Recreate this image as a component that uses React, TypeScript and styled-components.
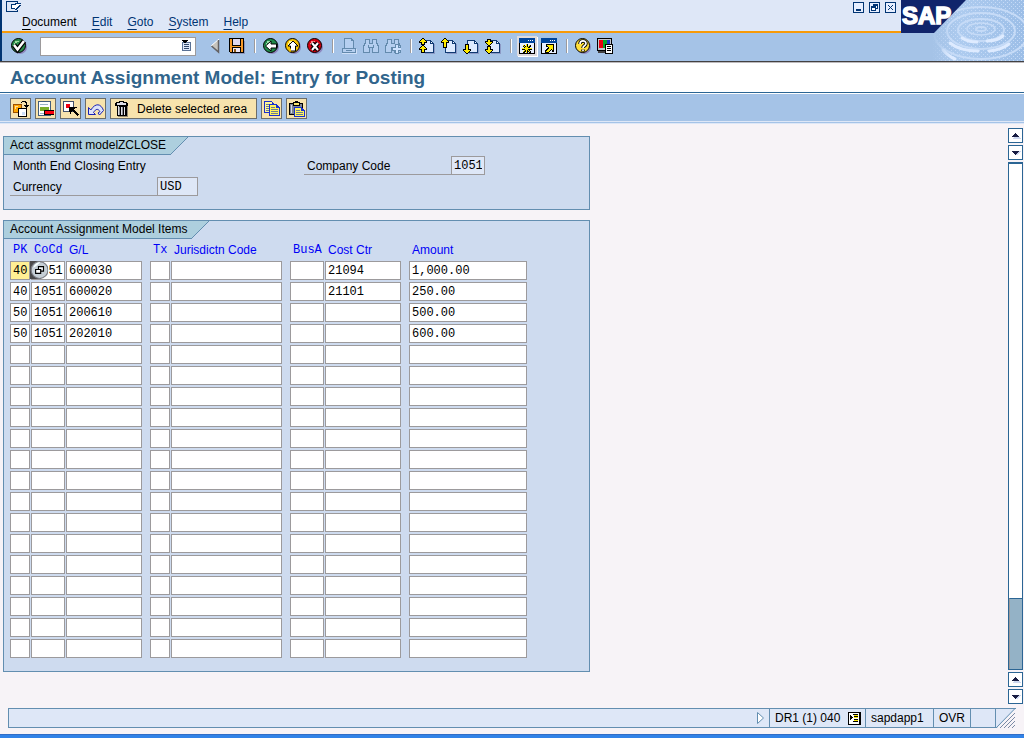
import React from 'react';
import styled, { createGlobalStyle, css } from 'styled-components';

const sans = '"Liberation Sans", Arial, sans-serif';
const mono = '"Liberation Mono", "Courier New", monospace';

const c = {
  page: '#f7f3f7',
  menu: '#dee7f7',
  bar: '#a5c3e7',
  panel: '#cedbef',
  line: '#638eb0',
  tab: '#adcfde',
  navy: '#003473',
  steel: '#2b6594',
  field: '#9c9a9c',
  cream: '#f7e3ad',
};

const GlobalStyle = createGlobalStyle`
  * { box-sizing: border-box; }
  body { margin: 0; background: ${c.page}; font: 12px/16px ${sans}; color: #000; }
  button, input { font: inherit; color: inherit; }
  button { padding: 0; border: 0; background: none; cursor: pointer; }
  svg { display: block; }
`;

const Page = styled.div`
  display: flex;
  flex-direction: column;
  min-height: 100vh;
`;

/* ---- header ---- */
const Header = styled.header`
  display: flex;
  height: 61px;
  background: ${c.bar};
  border-left: 2px solid ${c.navy};
`;
const HeaderMain = styled.div`
  flex: 1;
  min-width: 0;
  display: flex;
  flex-direction: column;
`;
const MenuArea = styled.div`
  display: flex;
  justify-content: space-between;
  height: 33px;
  background: ${c.menu};
  border-bottom: 2px solid #f79a08;
`;
const MenuLeft = styled.div`
  display: flex;
  flex-direction: column;
  gap: 1px;
  padding: 1px 0 0 4px;
  align-items: flex-start;
`;
const MenuNav = styled.nav`
  display: flex;
  gap: 15px;
  padding-left: 16px;
`;
const MenuLink = styled.a<{ $active?: boolean }>`
  display: block;
  color: ${(p) => (p.$active ? '#000' : c.navy)};
  text-decoration: none;
  &::first-letter {
    text-decoration: underline;
    text-underline-offset: 3px;
  }
`;
const WindowControls = styled.div`
  display: flex;
  align-items: flex-start;
  gap: 5px;
  padding: 2px 5px 0 0;
`;
const ToolRow = styled.div`
  flex: 1;
  display: flex;
  align-items: center;
  gap: 6px;
  padding: 0 0 2px 9px;
`;
const CommandBox = styled.div`
  position: relative;
  margin: 0 5px 0 7px;
`;
const CommandInput = styled.input`
  display: block;
  width: 156px;
  height: 19px;
  padding: 0 18px 0 3px;
  border: 1px solid ${c.field};
  background: #fff;
  outline: 0;
`;
const CommandDrop = styled.button`
  position: absolute;
  right: 2px;
  top: 1px;
`;
const IconButton = styled.button<{ $pressed?: boolean }>`
  flex: none;
  ${(p) =>
    p.$pressed &&
    css`
      background: #dedbde;
      box-shadow: 0 0 0 2px #dedbde, 1px 1px 0 2px #fff;
    `}
`;
const Separator = styled.span`
  width: 2px;
  height: 14px;
  margin: 0 1px 0 3px;
  border-left: 1px solid #9c9a9c;
  border-right: 1px solid #fff;
`;

/* ---- title and application toolbar ---- */
const TitleBar = styled.div`
  border-top: 1px solid #424142;
  background: #fff;
  box-shadow: inset 0 1px 0 #bdbabd;
  border-bottom: 1px solid ${c.steel};
  padding: 4px 10px 2px;
  h1 {
    margin: 0;
    font: bold 19px/24px ${sans};
    color: #31658c;
  }
`;
const AppToolbar = styled.div`
  display: flex;
  gap: 4px;
  height: 31px;
  padding: 4px 10px;
  border-top: 1px solid #fff;
  border-bottom: 3px double ${c.menu};
  background: ${c.bar};
`;
const AppButton = styled.button<{ $wide?: boolean }>`
  display: flex;
  align-items: center;
  gap: 7px;
  height: 21px;
  padding: ${(p) => (p.$wide ? '0 9px 0 3px' : '0 1px 0 2px')};
  border: 1px solid #6b6d6b;
  background: ${c.cream};
`;

/* ---- body ---- */
const Body = styled.div`
  flex: 1;
  display: flex;
  justify-content: space-between;
`;
const Content = styled.main`
  flex: 0 1 587px;
  margin: 12px 0 36px 3px;
  display: flex;
  flex-direction: column;
  gap: 10px;
`;
const Panel = styled.section`
  border: 1px solid ${c.line};
  background: ${c.panel};
`;
const PanelTab = styled.div`
  display: flex;
  height: 18px;
  h2 {
    margin: 0;
    padding: 0 4px 0 6px;
    background: ${c.tab};
    border-bottom: 1px solid ${c.line};
    font: 12px/17px ${sans};
  }
  &::after {
    content: '';
    width: 18px;
    background: linear-gradient(to bottom right, ${c.tab} 48%, ${c.line} 49%, ${c.line} 51%, transparent 52%);
  }
`;
const Summary = styled.div`
  display: grid;
  grid-template-columns: 188px 181px;
  column-gap: 106px;
  padding: 1px 6px 13px;
`;
const SummaryText = styled.p`
  margin: 0;
  padding-left: 3px;
  line-height: 21px;
`;
const LabeledField = styled.div`
  display: flex;
  height: 19px;
`;
const FieldLabel = styled.label`
  flex: 0 0 147px;
  padding-left: 3px;
  border-bottom: 1px solid ${c.field};
  line-height: 21px;
`;
const ReadonlyInput = styled.input<{ $width: number }>`
  width: ${(p) => p.$width}px;
  padding: 0 2px;
  border: 1px solid ${c.field};
  background: ${c.menu};
  font: 12px/16px ${mono};
  outline: 0;
`;

const ItemsTable = styled.table`
  table-layout: fixed;
  width: 517px;
  margin: 2px 6px 11px;
  border-collapse: collapse;
`;
const HeadCell = styled.th<{ $mono?: boolean }>`
  height: 20px;
  padding: 0 0 0 3px;
  text-align: left;
  vertical-align: top;
  white-space: nowrap;
  font: 12px/18px ${(p) => (p.$mono ? mono : sans)};
  color: #0000f7;
`;
const Cell = styled.td<{ $gap: number }>`
  position: relative;
  padding: 0 ${(p) => p.$gap}px 2px 0;
`;
const CellInput = styled.input<{ $focused?: boolean }>`
  display: block;
  width: 100%;
  height: 19px;
  padding: 0 0 0 2px;
  border: 1px solid ${c.field};
  border-radius: 0;
  background: ${(p) => (p.$focused ? '#ffef94' : '#fff')};
  font: 12px/16px ${mono};
  outline: 0;
`;
const MatchButton = styled.button`
  position: absolute;
  left: -1px;
  top: 0;
`;

/* ---- scroll bar ---- */
const ScrollRail = styled.div`
  display: flex;
  flex-direction: column;
  gap: 2px;
  width: 15px;
  margin: 4px 1px 4px 0;
`;
const ScrollButton = styled.button`
  display: flex;
  align-items: center;
  justify-content: center;
  height: 15px;
  flex: none;
  border: 1px solid ${c.steel};
  background: #fff;
`;
const ScrollTrack = styled.div`
  flex: 1;
  display: flex;
  align-items: flex-end;
  border: 1px solid ${c.steel};
  border-top-width: 2px;
  background: #fff;
`;
const ScrollThumb = styled.div`
  flex: 1;
  height: 71px;
  border-top: 1px solid ${c.steel};
  border-left: 1px solid #9c9a9c;
  background: #94b2c6;
`;

/* ---- status bar ---- */
const StatusBar = styled.footer`
  display: flex;
  height: 20px;
  margin: 0 8px 6px;
  border: 1px solid ${c.line};
  border-right: 0;
  background: ${c.menu};
`;
const StatusMessage = styled.div`
  flex: 1;
  display: flex;
  align-items: center;
  justify-content: flex-end;
  padding-right: 4px;
`;
const StatusCell = styled.div<{ $width: number }>`
  display: flex;
  align-items: center;
  gap: 8px;
  width: ${(p) => p.$width}px;
  padding-left: 5px;
  border-left: 1px solid ${c.line};
  white-space: nowrap;
`;
const BottomEdge = styled.div`
  height: 4px;
  background: #3182e7;
  border-top: 1px solid #316dc6;
`;

/* ---- icons ---- */
type IconName =
  | 'check' | 'list' | 'prev' | 'save' | 'back' | 'exit' | 'cancel' | 'print' | 'find' | 'findNext'
  | 'first' | 'pageUp' | 'pageDown' | 'last' | 'session' | 'shortcut' | 'help' | 'layout'
  | 'detail' | 'removeRow' | 'choose' | 'undo' | 'trash' | 'copy' | 'paste' | 'match';

const ball = (fill: string, hi: string) => (
  <>
    <circle cx="9" cy="9" r="7" fill="#8c86bd" />
    <circle cx="7.5" cy="7.5" r="7" fill={fill} stroke="#000" />
    <path d="M4 3h4v1H6v1H4v2H3V5h1z" fill={hi} />
  </>
);
const sheet = (
  <>
    <path d="M6 15h9V6h1v10H6z" fill="#8c9ac6" />
    <path d="M4 2h8v1h1v1h1v1h1v10H4z" fill="#103a73" />
    <path d="M5 3h6v3h3v8H5z" fill="#deebff" />
    <path d="M12 4h1v1h-1z" fill="#fff" />
  </>
);
const up = (y: number, stem: number) => (
  <>
    <path d={`M3 ${y}h2v1h1v1h1v1h1v2H6v${stem}H2v-${stem}H0v-2h1v-1h1v-1h1z`} fill="#000" />
    <path d={`M3 ${y + 1}h2v1h1v1h1v1H5v${stem}H3v-${stem}H1v-1h1v-1h1z`} fill="#ffeb00" />
  </>
);
const down = (y: number, stem: number) => (
  <g transform={`matrix(1 0 0 -1 0 ${y})`}>{up(0, stem)}</g>
);
const frame = (
  <>
    <path d="M0 0h16v16H0z" fill="#000" />
    <path d="M1 5h14v10H1z" fill="#e7efff" />
    <path d="M0 0h16v5H0z" fill="#00459c" />
    <path d="M9 2h1v1H9zM11 2h1v1h-1zM13 2h1v1h-1z" fill="#fff" />
  </>
);

const art: Record<IconName, React.ReactNode> = {
  check: (
    <>
      {ball('#298a4a', '#9cdb9c')}
      <path d="M3 7l3.500 4.500L13 3" fill="none" stroke="#000" strokeWidth="5" />
      <path d="M3 7l3.500 4.500L13 3" fill="none" stroke="#fff" strokeWidth="2.500" />
    </>
  ),
  list: (
    <>
      <path d="M4 4h9v9H4z" fill="#5a7194" />
      <path d="M5 5h7v7H5z" fill="#dee7f7" />
      <path d="M6 6h5v1H6zM6 8h5v1H6zM6 10h5v1H6z" fill="#31496b" />
      <path d="M4 2h6v1H9v1H8v1H6V4H5V3H4z" fill="#000" />
    </>
  ),
  prev: (
    <>
      <path d="M4 8l8-7v13z" fill="#c6c3bd" />
      <path d="M4 8l8-7" fill="none" stroke="#fff" />
      <path d="M11.500 2v12L4.500 8" fill="none" stroke="#636163" strokeWidth="1.500" />
    </>
  ),
  save: (
    <>
      <path d="M2 15h13V3h1v13H2z" fill="#8c96bd" />
      <path d="M0 0h15v15H1v-1H0z" fill="#000" />
      <path d="M1 1h13v13H1z" fill="#f79a29" />
      <path d="M3 0h9v8H3zM3 9h9v6H3z" fill="#000" />
      <path d="M4 1h7v6H4z" fill="#ded7ef" />
      <path d="M4 10h7v4H4z" fill="#efe7f7" />
      <path d="M5 11h2v3H5z" fill="#8c5a18" />
    </>
  ),
  back: (
    <>
      {ball('#218a4a', '#9ce3ad')}
      <path d="M2.500 8L8 3v3h5.500v4H8v3z" fill="#fff" stroke="#000" />
    </>
  ),
  exit: (
    <>
      {ball('#f7c300', '#fff79c')}
      <path d="M8 3l5 5h-2.500v5h-5V8H3z" fill="#fff" stroke="#000" />
      <path d="M4 10.500h2v3H4z" fill="#f7c300" />
    </>
  ),
  cancel: (
    <>
      {ball('#d60010', '#ff8c8c')}
      <path d="M5 5l6 7M11 5l-6 7" fill="none" stroke="#000" strokeWidth="4.500" />
      <path d="M5 5l6 7M11 5l-6 7" fill="none" stroke="#fff" strokeWidth="2" />
    </>
  ),
  print: (
    <>
      <path d="M1 15h14v-4h1v5H1z" fill="#cedff7" />
      <path d="M3 0h8v1h1v1h1v8h2v5H1v-5h2z" fill="#638aad" />
      <path d="M4 1h6v2h2v7H4zM2 11h12v3H2z" fill="#b5cff0" />
      <path d="M5 12h6v1H5z" fill="#638aad" />
    </>
  ),
  find: (
    <>
      <path d="M2 1h5v4h2V1h5v4h1v2h1v8H9v-5H7v5H0V7h1V5h1z" fill="#638aad" />
      <path d="M3 2h3v4h4V2h3v4h1v2h1v6h-5V9H6v5H1V8h1V6h1z" fill="#b5cff0" />
      <path d="M5 7h1v3H5zM10 7h1v3h-1z" fill="#638aad" />
    </>
  ),
  findNext: (
    <>
      <path d="M2 1h5v4h2V1h5v4h1v2h1v8H9v-5H7v5H0V7h1V5h1z" fill="#638aad" />
      <path d="M3 2h3v4h4V2h3v4h1v2h1v6h-5V9H6v5H1V8h1V6h1z" fill="#b5cff0" />
      <path d="M10 6h4v3h2v4h-2v3h-4v-3H7V9h3z" fill="#638aad" />
      <path d="M11 7h2v3h3v2h-3v3h-2v-3H8v-2h3z" fill="#cee3ff" />
    </>
  ),
  first: <>{sheet}{up(0, 2)}{up(7, 3)}</>,
  pageUp: <>{sheet}{up(0, 5)}</>,
  pageDown: <>{sheet}{down(16, 5)}</>,
  last: <>{sheet}{down(8, 2)}{down(16, 3)}</>,
  session: (
    <>
      {frame}
      <path d="M7 6h2v2h1V7h2v2h-1v1h2v2h-2v1h1v2h-2v-1H9v1H7v-1H6v1H4v-2h1v-1H3v-2h2V9H4V7h2v1h1z" fill="#000" />
      <path d="M7 6h1v9H7zM3 10h10v1H3zM4 7h1v1H4zM5 8h1v1H5zM6 9h3v3H6zM9 8h1v1H9zM10 7h1v1h-1zM5 12h1v1H5zM4 13h1v1H4zM9 12h1v1H9zM10 13h1v1h-1z" fill="#ffeb00" />
    </>
  ),
  shortcut: (
    <>
      {frame}
      <path d="M5 6h8v8h-2v-2h-1v1H9v1H8v1H4v-3h1v-1h1v-1h1V9H5z" fill="#000" />
      <path d="M6 7h6v5h-1v-1h-1v1H9v1H8v1H5v-1h1v-1h1v-1h1V9H7V8H6z" fill="#ffeb00" />
    </>
  ),
  help: (
    <>
      <circle cx="9" cy="9" r="7" fill="#8c86bd" />
      <circle cx="7.500" cy="7.500" r="7" fill="#ffdf39" stroke="#000" />
      <path d="M5 6c0-4 6-4 6-.5C11 8 8 7.500 8 10M8 11.500v2" fill="none" stroke="#000" strokeWidth="3.500" />
      <path d="M5 6c0-4 6-4 6-.5C11 8 8 7.500 8 10M8 11.500v1.500" fill="none" stroke="#fff" strokeWidth="1.700" />
    </>
  ),
  layout: (
    <>
      <path d="M0 0h15v13H0z" fill="#000" />
      <path d="M1 1h13v11H1z" fill="#c6c7ce" />
      <path d="M2 2h4v8H2z" fill="#e70010" />
      <path d="M6 2h4v8H6z" fill="#00a629" />
      <path d="M10 2h3v8h-3z" fill="#1834c6" />
      <path d="M1 13h8v2H1z" fill="#424142" />
      <path d="M8 6h8v10H8z" fill="#000" />
      <path d="M9 7h6v8H9z" fill="#fff" />
      <path d="M10 8h4v1h-4zM10 10h4v1h-4zM10 12h4v1h-4z" fill="#000" />
    </>
  ),
  detail: (
    <>
      <path d="M0 3h9v9H0z" fill="#9c5100" />
      <path d="M1 4h7v7H1z" fill="#ffa600" />
      <path d="M2 5h3v1H3v2H2z" fill="#ffdf9c" />
      <path d="M8 1h1V0h4v1h1v3h2v1h-1v1h-1v1h-1V6h-1V5h-1V4h2V2h-1V1H9v1H8z" fill="#000" />
      <path d="M5 7h9v9H5z" fill="#000" />
      <path d="M6 8h7v7H6z" fill="#fff" />
      <path d="M9 11h3v3H9z" fill="#cedff7" />
    </>
  ),
  removeRow: (
    <>
      <path d="M0 0h13v15H0z" fill="#425d7b" />
      <path d="M1 1h11v13H1z" fill="#fff" />
      <path d="M2 3h8v1H2zM2 12h4v1H2z" fill="#9cb2c6" />
      <path d="M2 6h9v4H2z" fill="#7bae29" />
      <path d="M6 9h10v5H6z" fill="#000" />
      <path d="M7 10h9v3H7z" fill="#f70010" />
    </>
  ),
  choose: (
    <>
      <path d="M0 0h11v11H0z" fill="#42516b" />
      <path d="M1 1h9v9H1z" fill="#fff" />
      <path d="M3 3h4v4H3z" fill="#ef0010" />
      <path d="M6 6h8v1h-2v1h-1v1h1v1h1v1h1v1h1v1h1v1h-1v1h-1v-1h-1v-1h-1v-1h-1v-1h-1v-1H9v1H8v2H7v-2H6z" fill="#000" />
    </>
  ),
  undo: (
    <path
      d="M.5 6.500V13.500H7.500L5.500 11.500C8 7.500 10 7.500 12 10.500L10 12l1.500 2 4-4.500C13 2.500 7.500 1.500 2.800 9z"
      fill="#dee3f7"
      stroke="#1820b5"
    />
  ),
  trash: (
    <>
      <path d="M4 15h9V5h1v11H4z" fill="#948a73" />
      <path d="M5 0h5v1h3v1h1v3h-1v10H3V5H1V2h1V1h3z" fill="#000" />
      <path d="M6 1h3v1H6zM3 2h9v2H3z" fill="#dedfe7" />
      <path d="M4 5h1v9H4zM7 6h1v8H7zM10 6h1v8h-1z" fill="#dedfe7" />
      <path d="M5 6h1v8H5zM8 6h1v8H8z" fill="#8c8e94" />
    </>
  ),
  copy: (
    <>
      <path d="M0 0h8v1h1v1h1v10H0z" fill="#1830ce" />
      <path d="M1 1h7v10H1z" fill="#fff794" />
      <path d="M2 3h5v1H2zM2 5h5v1H2zM2 7h5v1H2zM2 9h5v1H2z" fill="#6b7d94" />
      <path d="M5 3h8v1h1v1h1v1h1v9H5z" fill="#1830ce" />
      <path d="M6 4h6v3h3v7H6z" fill="#fff35a" />
      <path d="M7 6h4v1H7zM7 8h7v1H7zM7 10h7v1H7zM7 12h7v1H7z" fill="#6b7d94" />
    </>
  ),
  paste: (
    <>
      <path d="M0 2h14v12H0z" fill="#000" />
      <path d="M1 3h12v10H1z" fill="#7b8494" />
      <path d="M2 4h1v8H2z" fill="#d6dbe7" />
      <path d="M4 1h2V0h3v1h2v4H4z" fill="#000" />
      <path d="M5 2h5v2H5z" fill="#f7e36b" />
      <path d="M5 6h8v1h1v1h1v1h1v7H5z" fill="#1830ce" />
      <path d="M6 7h6v3h3v5H6z" fill="#fff35a" />
      <path d="M7 9h4v1H7zM7 11h7v1H7zM7 13h7v1H7z" fill="#6b7d94" />
    </>
  ),
  match: (
    <>
      <path d="M0 0h10v16H0z" fill="#4a494a" />
      <circle cx="8.500" cy="8" r="7.500" fill="#c6cfd6" stroke="#7b7d84" />
      <path d="M3 6a6 6 0 0 1 6-5c-2 2-4 4-6 5z" fill="#f7ffff" />
      <path d="M7.500 5h4.500v4H7.500z" fill="#eff3f7" stroke="#000" />
      <path d="M5 7.500h4.500v3.500H5z" fill="#fff" stroke="#000" />
    </>
  ),
};

const smooth: IconName[] = ['check', 'cancel', 'help', 'back', 'exit', 'undo', 'prev', 'match'];

const Icon = ({ name }: { name: IconName }) => (
  <svg
    width="16"
    height="16"
    viewBox="0 0 16 16"
    aria-hidden="true"
    shapeRendering={smooth.includes(name) ? 'auto' : 'crispEdges'}
  >
    {art[name]}
  </svg>
);

const Arrow = ({ dir }: { dir: 'up' | 'down' }) => (
  <svg width="11" height="9" viewBox="0 0 11 9" shapeRendering="crispEdges" aria-hidden="true">
    <path d={dir === 'up' ? 'M6 3l5 5H3z' : 'M2 3h9L7 8z'} fill="#ced7ef" />
    <path d={dir === 'up' ? 'M5 2h1v1h1v1h1v1h1v1H2V5h1V4h1V3h1z' : 'M2 3h7v1H8v1H7v1H6v1H5V6H4V5H3V4H2z'} fill="#181c42" />
  </svg>
);

const WindowIcon = ({ kind }: { kind: 'min' | 'restore' | 'close' }) => (
  <svg width="11" height="11" viewBox="0 0 11 11" shapeRendering="crispEdges" aria-hidden="true">
    <path d="M0 0h11v11H0z" fill={c.navy} />
    <path d="M1 1h9v9H1z" fill="#e7efff" />
    {kind === 'min' && <path d="M3 7h5v2H3z" fill={c.navy} />}
    {kind === 'restore' && (
      <>
        <path d="M4 2h5v5H4z" fill={c.navy} />
        <path d="M5 4h3v2H5z" fill="#fff" />
        <path d="M2 4h5v5H2z" fill={c.navy} />
        <path d="M3 6h3v2H3z" fill="#fff" />
      </>
    )}
    {kind === 'close' && (
      <path
        d="M3 3h1v1H3zM7 3h1v1H7zM4 4h1v1H4zM6 4h1v1H6zM5 5h1v1H5zM4 6h1v1H4zM6 6h1v1H6zM3 7h1v1H3zM7 7h1v1H7z"
        fill={c.navy}
      />
    )}
  </svg>
);

const Brand = () => (
  <svg width="123" height="61" viewBox="0 0 123 61" role="img" aria-label="SAP">
    <defs>
      <linearGradient id="water" x1="0" x2="1">
        <stop offset="0.25" stopColor="#a5c3e7" />
        <stop offset="0.5" stopColor="#adcbef" />
        <stop offset="1" stopColor="#9cbee7" />
      </linearGradient>
      <pattern id="grain" width="4" height="4" patternUnits="userSpaceOnUse">
        <path d="M0 0h1v1H0zM2 2h1v1H2z" fill="#c6dbf7" />
      </pattern>
      <linearGradient id="fade" x1="0" x2="1">
        <stop offset="0.25" stopColor="#000" />
        <stop offset="0.4" stopColor="#fff" />
      </linearGradient>
      <mask id="edge">
        <path d="M0 0h123v61H0z" fill="url(#fade)" />
      </mask>
    </defs>
    <path d="M0 0h123v61H0z" fill="url(#water)" />
    <g mask="url(#edge)">
      <path d="M0 0h123v61H0z" fill="url(#grain)" />
      <g fill="none" stroke="#c6dbf7">
        <ellipse cx="80" cy="29" rx="5" ry="2" strokeWidth="2" />
        <ellipse cx="80" cy="29" rx="14" ry="6" strokeWidth="1.500" />
        <ellipse cx="80" cy="30" rx="23" ry="11" strokeWidth="2" />
        <ellipse cx="80" cy="31" rx="34" ry="18" strokeWidth="2" />
        <ellipse cx="80" cy="33" rx="47" ry="26" strokeWidth="2" />
      </g>
      <g fill="none" stroke="#deebff" strokeWidth="3" strokeLinecap="round">
        <path d="M49 43q10 8 28 8M86 41q10 0 16-5M61 38q6 4 15 4M42 50q5 6 12 9M88 51q12-1 20-7" />
      </g>
    </g>
    <path d="M0 0h65L33 33H0z" fill="#10246b" />
    <text
      x="1"
      y="24"
      fill="#fff"
      stroke="#fff"
      strokeWidth="1.500"
      fontFamily='"Liberation Sans", Arial, sans-serif'
      fontWeight="bold"
      fontSize="24"
    >
      SAP
    </text>
  </svg>
);

/* ---- data ---- */
const menus = ['Document', 'Edit', 'Goto', 'System', 'Help'];

const toolGroups: { name: IconName; label: string; pressed?: boolean }[][] = [
  [
    { name: 'prev', label: 'Hide command field' },
    { name: 'save', label: 'Save' },
  ],
  [
    { name: 'back', label: 'Back' },
    { name: 'exit', label: 'Exit' },
    { name: 'cancel', label: 'Cancel' },
  ],
  [
    { name: 'print', label: 'Print' },
    { name: 'find', label: 'Find' },
    { name: 'findNext', label: 'Find next' },
  ],
  [
    { name: 'first', label: 'First page' },
    { name: 'pageUp', label: 'Previous page' },
    { name: 'pageDown', label: 'Next page' },
    { name: 'last', label: 'Last page' },
  ],
  [
    { name: 'session', label: 'Create session', pressed: true },
    { name: 'shortcut', label: 'Create shortcut' },
  ],
  [
    { name: 'help', label: 'Help' },
    { name: 'layout', label: 'Customize layout' },
  ],
];

const appTools: { name: IconName; label: string; text?: string }[] = [
  { name: 'detail', label: 'Other model' },
  { name: 'removeRow', label: 'Delete row' },
  { name: 'choose', label: 'Select' },
  { name: 'undo', label: 'Undo' },
  { name: 'trash', label: 'Delete selected area', text: 'Delete selected area' },
  { name: 'copy', label: 'Copy' },
  { name: 'paste', label: 'Paste' },
];

const columns = [
  { label: 'PK', width: 21, gap: 1, mono: true },
  { label: 'CoCd', width: 35, gap: 1, mono: true },
  { label: 'G/L', width: 84, gap: 8 },
  { label: 'Tx', width: 21, gap: 1, mono: true },
  { label: 'Jurisdictn Code', width: 119, gap: 8 },
  { label: 'BusA', width: 35, gap: 1, mono: true },
  { label: 'Cost Ctr', width: 84, gap: 8 },
  { label: 'Amount', width: 118, gap: 0 },
];

const entries = [
  ['40', '1051', '600030', '', '', '', '21094', '1,000.00'],
  ['40', '1051', '600020', '', '', '', '21101', '250.00'],
  ['50', '1051', '200610', '', '', '', '', '500.00'],
  ['50', '1051', '202010', '', '', '', '', '600.00'],
];
const rows = Array.from({ length: 19 }, (_, i) => entries[i] ?? columns.map(() => ''));

export default function App() {
  return (
    <Page>
      <GlobalStyle />
      <Header>
        <HeaderMain>
          <MenuArea>
            <MenuLeft>
              <IconButton aria-label="System menu">
                <svg width="16" height="12" viewBox="0 0 16 12" shapeRendering="crispEdges" aria-hidden="true">
                  <path d="M0 0h12v2h-1V1H1v9h10V9h1v2H0z" fill={c.navy} />
                  <path d="M5 3h4V2h6v1h-1v1h1v1h-1v1h-1v1h-1v1h-1v1H9V8H5z" fill={c.navy} />
                  <path d="M6 4h4V3h4v1h-1v1h-1v1h-1v1h-1v1H9V7H6z" fill="#fff" />
                </svg>
              </IconButton>
              <MenuNav>
                {menus.map((m, i) => (
                  <MenuLink key={m} href="#" $active={i === 0}>
                    {m}
                  </MenuLink>
                ))}
              </MenuNav>
            </MenuLeft>
            <WindowControls>
              <IconButton aria-label="Minimize"><WindowIcon kind="min" /></IconButton>
              <IconButton aria-label="Restore"><WindowIcon kind="restore" /></IconButton>
              <IconButton aria-label="Close"><WindowIcon kind="close" /></IconButton>
            </WindowControls>
          </MenuArea>
          <ToolRow>
            <IconButton aria-label="Enter"><Icon name="check" /></IconButton>
            <CommandBox>
              <CommandInput aria-label="Command" />
              <CommandDrop aria-label="Command history"><Icon name="list" /></CommandDrop>
            </CommandBox>
            {toolGroups.map((group, g) => (
              <React.Fragment key={g}>
                {g > 0 && <Separator />}
                {group.map((t) => (
                  <IconButton key={t.name} aria-label={t.label} $pressed={t.pressed}>
                    <Icon name={t.name} />
                  </IconButton>
                ))}
              </React.Fragment>
            ))}
          </ToolRow>
        </HeaderMain>
        <Brand />
      </Header>

      <TitleBar>
        <h1>Account Assignment Model: Entry for Posting</h1>
      </TitleBar>
      <AppToolbar>
        {appTools.map((t) => (
          <AppButton key={t.name} aria-label={t.label} $wide={!!t.text}>
            <Icon name={t.name} />
            {t.text && <span>{t.text}</span>}
          </AppButton>
        ))}
      </AppToolbar>

      <Body>
        <Content>
          <Panel>
            <PanelTab><h2>Acct assgnmt modelZCLOSE</h2></PanelTab>
            <Summary>
              <SummaryText>Month End Closing Entry</SummaryText>
              <LabeledField>
                <FieldLabel htmlFor="company">Company Code</FieldLabel>
                <ReadonlyInput id="company" $width={34} defaultValue="1051" readOnly />
              </LabeledField>
              <LabeledField>
                <FieldLabel htmlFor="currency">Currency</FieldLabel>
                <ReadonlyInput id="currency" $width={41} defaultValue="USD" readOnly />
              </LabeledField>
            </Summary>
          </Panel>
          <Panel>
            <PanelTab><h2>Account Assignment Model Items</h2></PanelTab>
            <ItemsTable>
              <colgroup>
                {columns.map((col) => (
                  <col key={col.label} width={col.width} />
                ))}
              </colgroup>
              <thead>
                <tr>
                  {columns.map((col) => (
                    <HeadCell key={col.label} scope="col" $mono={col.mono}>{col.label}</HeadCell>
                  ))}
                </tr>
              </thead>
              <tbody>
                {rows.map((row, r) => (
                  <tr key={r}>
                    {columns.map((col, k) => (
                      <Cell key={col.label} $gap={col.gap}>
                        <CellInput
                          aria-label={`${col.label} ${r + 1}`}
                          defaultValue={row[k]}
                          $focused={r === 0 && k === 0}
                        />
                        {r === 0 && k === 1 && (
                          <MatchButton aria-label="Possible entries">
                            <svg width="18" height="18" viewBox="0 0 16 16" aria-hidden="true">
                              {art.match}
                            </svg>
                          </MatchButton>
                        )}
                      </Cell>
                    ))}
                  </tr>
                ))}
              </tbody>
            </ItemsTable>
          </Panel>
        </Content>
        <ScrollRail>
          <ScrollButton aria-label="Scroll to top"><Arrow dir="up" /></ScrollButton>
          <ScrollButton aria-label="Scroll down"><Arrow dir="down" /></ScrollButton>
          <ScrollTrack><ScrollThumb /></ScrollTrack>
          <ScrollButton aria-label="Scroll up"><Arrow dir="up" /></ScrollButton>
          <ScrollButton aria-label="Scroll to bottom"><Arrow dir="down" /></ScrollButton>
        </ScrollRail>
      </Body>

      <StatusBar>
        <StatusMessage>
          <svg width="9" height="12" viewBox="0 0 9 12" aria-hidden="true">
            <path d="M1.500.5v11l6-5.500z" fill="#fff" stroke={c.line} />
          </svg>
        </StatusMessage>
        <StatusCell $width={96}>
          <span>DR1 (1) 040</span>
          <svg width="13" height="13" viewBox="0 0 13 13" shapeRendering="crispEdges" aria-hidden="true">
            <path d="M0 0h13v13H0z" fill="#000" />
            <path d="M1 1h10v11H1z" fill="#fff" />
            <path d="M2 3h1v1h1v1h1v1H4v1H3v1H2z" fill="#000" />
            <path d="M5 2h5v1H5zM6 4h4v1H6zM6 7h4v1H6zM5 9h5v1H5z" fill="#000" />
            <path d="M6 3h4v1H6zM6 5h4v1H6zM6 8h4v1H6z" fill="#ffeb00" />
          </svg>
        </StatusCell>
        <StatusCell $width={68}>sapdapp1</StatusCell>
        <StatusCell $width={37}>OVR</StatusCell>
        <StatusCell $width={25} />
        <svg width="21" height="20" viewBox="0 1 21 20" aria-hidden="true">
          <path d="M0 0h21L2 20H0z" fill="#dee7f7" />
          <path d="M21 0v21H1z" fill={c.page} />
          <path d="M.5 0v20M20.500 0L1 20" stroke={c.line} />
          <path d="M20 5L5 20M20 9L9 20M20 13l-7 7M20 17l-3 3" stroke="#7b8aa5" />
        </svg>
      </StatusBar>
      <BottomEdge />
    </Page>
  );
}
